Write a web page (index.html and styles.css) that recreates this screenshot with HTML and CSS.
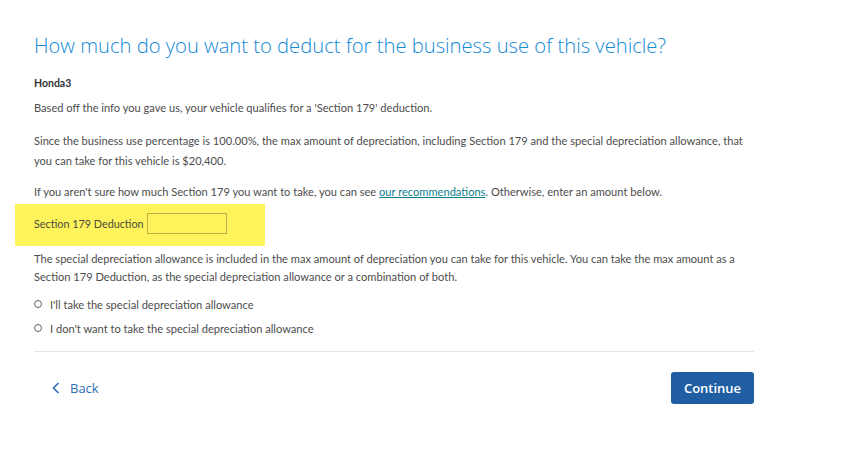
FILE: index.html
```html
<!DOCTYPE html>
<html lang="en">
<head>
    <meta charset="UTF-8">
    <meta name="viewport" content="width=device-width, initial-scale=1.0">
    <title>Section 179 Deduction</title>
    <link rel="stylesheet" href="styles.css">
</head>
<body>
    <div class="page">
        <h1 class="title">How much do you want to deduct for the business use of this vehicle?</h1>
        <div class="vehicle">Honda3</div>
        <p class="intro">Based off the info you gave us, your vehicle qualifies for a 'Section 179' deduction.</p>
        <p class="text">Since the business use percentage is 100.00%, the max amount of depreciation, including Section 179 and the special depreciation allowance, that you can take for this vehicle is $20,400.</p>
        <p class="text">If you aren't sure how much Section 179 you want to take, you can see <a href="#" class="link">our recommendations</a>. Otherwise, enter an amount below.</p>

        <div class="highlight">
            <label for="deduction" class="field-label">Section 179 Deduction</label>
            <input type="text" id="deduction" class="amount">
        </div>

        <p class="note">The special depreciation allowance is included in the max amount of depreciation you can take for this vehicle. You can take the max amount as a Section 179 Deduction, as the special depreciation allowance or a combination of both.</p>

        <div class="options">
            <label class="option"><span class="radio"></span>I'll take the special depreciation allowance</label>
            <label class="option"><span class="radio"></span>I don't want to take the special depreciation allowance</label>
        </div>

        <div class="footer">
            <a href="#" class="back">
                <svg width="8" height="12" viewBox="0 0 8 12"><path d="M6.5 1 L1.5 6 L6.5 11" fill="none" stroke="#2f6db5" stroke-width="1.6"/></svg>
                Back
            </a>
            <button class="continue">Continue</button>
        </div>
    </div>
</body>
</html>
```

FILE: styles.css
```css
body {
    margin: 0;
    padding: 0;
    background-color: #fff;
    font-family: Lato, "Open Sans", sans-serif;
    color: #4d4d4d;
}
.page {
    width: 720px;
    padding: 33px 0 0 34px;
}
.title {
    margin: 0;
    font-family: "Open Sans", sans-serif;
    font-weight: 300;
    font-size: 20.2px;
    line-height: 24px;
    color: #168ad6;
}
.vehicle {
    margin-top: 19px;
    font-size: 10.5px;
    line-height: 14px;
    font-weight: bold;
    color: #333;
}
.intro {
    margin: 11px 0 0;
    font-size: 11.1px;
    line-height: 14px;
}
.text {
    margin: 16px 0 0;
    font-size: 11.1px;
    line-height: 20px;
}
.text + .text {
    margin-top: 11px;
}
.link {
    color: #0d7d8c;
    text-decoration: underline;
}
.highlight {
    display: flex;
    align-items: center;
    width: 194px;
    margin: 2px 0 0 -19px;
    padding: 9px 37px 12px 19px;
    background-color: #fff35b;
}
.field-label {
    font-size: 10.8px;
    color: #4a4a3a;
    margin-right: 3px;
    white-space: nowrap;
}
.amount {
    width: 80px;
    height: 21px;
    box-sizing: border-box;
    border: 1px solid #bcaf48;
    background: transparent;
    padding: 0 4px;
}
.note {
    margin: 4px 0 0;
    font-size: 11.1px;
    line-height: 18px;
}
.options {
    margin-top: 6px;
}
.option {
    display: flex;
    align-items: center;
    height: 24px;
    font-size: 11.1px;
}
.radio {
    width: 6px;
    height: 6px;
    border: 1px solid #666;
    border-radius: 50%;
    margin-right: 8px;
}
.footer {
    display: flex;
    justify-content: space-between;
    align-items: center;
    margin-top: 11px;
    padding: 20px 0 0 18px;
    border-top: 1px solid #e6e6e6;
}
.back {
    display: flex;
    align-items: center;
    gap: 10px;
    font-family: "Open Sans", sans-serif;
    font-size: 13px;
    color: #2f6db5;
    text-decoration: none;
}
.continue {
    width: 83px;
    height: 32px;
    border: none;
    border-radius: 3px;
    background-color: #1f5ea3;
    color: #fff;
    font-family: "Open Sans", sans-serif;
    font-size: 13px;
    font-weight: 600;
    cursor: pointer;
}
```
